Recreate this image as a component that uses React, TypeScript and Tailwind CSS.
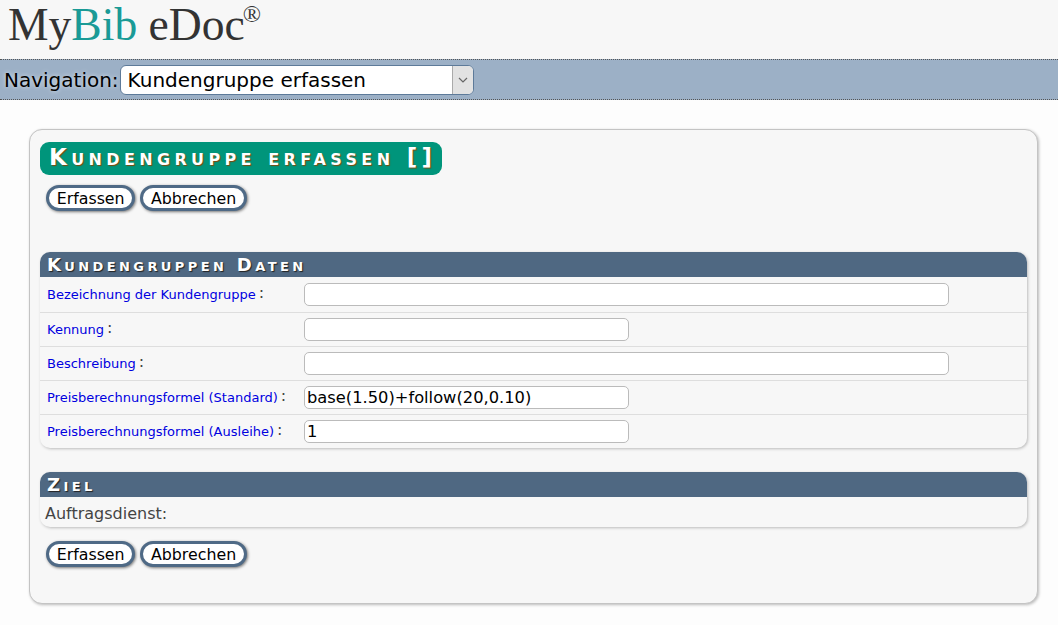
function Btn({ label }: { label: string }) {
  return (
    <button className="h-[26px] rounded-[13px] border-[3px] border-[#4f6a86] bg-white px-[7.7px] pt-[1px] text-[15.8px] leading-[18px] text-black shadow-[1px_1px_3px_#777]">
      {label}
    </button>
  );
}

function Buttons() {
  return (
    <div className="flex gap-[5px] pl-[6px]">
      <Btn label="Erfassen" />
      <Btn label="Abbrechen" />
    </div>
  );
}

function SectionHead({ title }: { title: string }) {
  return (
    <div className="h-[25px] rounded-t-[10px] bg-[#4f6882] pl-[7px] text-[18px] font-bold leading-[26px] tracking-[3.4px] text-white [font-variant:small-caps] [text-shadow:1px_1px_1px_#222] whitespace-nowrap">
      {title}
    </div>
  );
}

function Row({ label, value, wide, h }: { label: string; value?: string; wide?: boolean; h: string }) {
  return (
    <div className={`flex items-center ${h}`}>
      <div className="w-[264px] shrink-0 pb-[2px] pl-[7px] text-[#444]">
        <span className="text-[13px] text-[#0000e0]">{label}</span>
        <span className="relative top-[-1px] ml-[3px] text-[16px]">:</span>
      </div>
      <input
        readOnly
        value={value ?? ""}
        className={`h-[23px] rounded-[5px] border border-[#bbb] bg-white px-[2px] pt-[1px] text-[16.3px] text-black outline-none ${wide ? "w-[645px]" : "w-[325px]"}`}
      />
    </div>
  );
}

export default function App() {
  return (
    <div className="h-[625px] w-[1058px] overflow-hidden bg-[#fdfdfd] font-['DejaVu_Sans',sans-serif] text-[16px]">
      <header className="flex h-[59px] items-start bg-[#f7f7f7] pl-[8px] font-['Liberation_Serif',serif] text-[45.6px] leading-[50px] text-[#333]">
        <span>My<span className="text-[#1a9a96]">Bib</span> eDoc</span>
        <span className="ml-[-2px] mt-[-11px] text-[24px]">®</span>
      </header>
      <nav className="flex h-[41px] items-center border-y border-dotted border-[#555] bg-[#9cb0c6] pl-[4px]">
        <span className="text-[20px] text-black [text-shadow:0_0_4px_#dfe6ee]">Navigation:</span>
        <div className="ml-[1px] flex h-[30px] w-[354px] items-center justify-between rounded-[6px] border border-[#5d7a99] bg-white pl-[7px] text-[20px] text-black">
          <span>Kundengruppe erfassen</span>
          <span className="flex h-full w-[21px] items-center justify-center rounded-r-[5px] border-l border-[#aaa] bg-[#e2e2e2]">
            <svg width="10" height="6" viewBox="0 0 10 6"><path d="M1 1l4 4 4-4" fill="none" stroke="#666" strokeWidth="1.2" /></svg>
          </span>
        </div>
      </nav>
      <main className="mx-[29px] mt-[29px] h-[475px] w-[1009px] rounded-[13px] border border-[#c4c4c4] bg-[#f7f7f7] px-[10px] pt-[12px] shadow-[1px_1px_3px_#bbb]">
        <h1 className="h-[33px] w-[402px] rounded-[9px] bg-[#00957b] pl-[9px] text-[23px] font-bold leading-[31px] tracking-[4.35px] text-white [font-variant:small-caps] [text-shadow:1px_1px_1px_#7a4a10] whitespace-nowrap">
          Kundengruppe erfassen []
        </h1>
        <div className="mt-[10px]"><Buttons /></div>
        <section className="mt-[41px] rounded-[10px] shadow-[1px_1px_3px_#bbb]">
          <SectionHead title="Kundengruppen Daten" />
          <div className="divide-y divide-[#dedede]">
            <Row h="h-[36px]" label="Bezeichnung der Kundengruppe" wide />
            <Row h="h-[34px]" label="Kennung" />
            <Row h="h-[34px]" label="Beschreibung" wide />
            <Row h="h-[34px]" label="Preisberechnungsformel (Standard)" value="base(1.50)+follow(20,0.10)" />
            <Row h="h-[33px]" label="Preisberechnungsformel (Ausleihe)" value="1" />
          </div>
        </section>
        <section className="mt-[24px] rounded-[10px] shadow-[1px_1px_3px_#bbb]">
          <SectionHead title="Ziel" />
          <div className="h-[30px] pl-[5px] text-[16px] leading-[33px] text-[#444]">Auftragsdienst:</div>
        </section>
        <div className="mt-[14px]"><Buttons /></div>
      </main>
    </div>
  );
}
